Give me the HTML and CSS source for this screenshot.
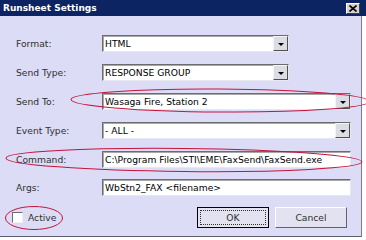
FILE: index.html
```html
<!DOCTYPE html>
<html>
<head>
  <meta charset="utf-8">
  <title>Runsheet Settings</title>
  <link rel="stylesheet" href="styles.css">
</head>
<body>
  <div class="window">
    <div class="titlebar">
      <span class="title">Runsheet Settings</span>
      <span class="close">
        <svg width="8" height="7" viewBox="0 0 8 7"><path d="M0.5 0.5 L7.5 6.5 M7.5 0.5 L0.5 6.5" stroke="#000" stroke-width="1.6"/></svg>
      </span>
    </div>

    <div class="dialog">
      <div class="form">
        <label>Format:</label>
        <div class="field select short"><span class="value">HTML</span><span class="arrow"></span></div>

        <label>Send Type:</label>
        <div class="field select short"><span class="value">RESPONSE GROUP</span><span class="arrow"></span></div>

        <label>Send To:</label>
        <div class="field select"><span class="value">Wasaga Fire, Station 2</span><span class="arrow"></span></div>

        <label>Event Type:</label>
        <div class="field select"><span class="value">- ALL -</span><span class="arrow"></span></div>

        <label>Command:</label>
        <div class="field"><span class="value">C:\Program Files\STI\EME\FaxSend\FaxSend.exe</span></div>

        <label class="tight">Args:</label>
        <div class="field tight"><span class="value">WbStn2_FAX &lt;filename&gt;</span></div>
      </div>

      <div class="footer">
        <div class="check"><span class="box"></span>Active</div>
        <div class="buttons">
          <button class="btn default"><span class="focus">OK</span></button>
          <button class="btn">Cancel</button>
        </div>
      </div>
    </div>

    <svg class="marks" width="366" height="240" viewBox="0 0 366 240">
      <ellipse cx="220" cy="100.5" rx="149" ry="11.5" transform="rotate(0.4 220 100.5)"/>
      <ellipse cx="184" cy="160" rx="178" ry="11.5" transform="rotate(0.6 184 160)"/>
      <ellipse cx="34" cy="218" rx="28.5" ry="11.5"/>
    </svg>
  </div>
</body>
</html>
```

FILE: styles.css
```css
body {
  margin: 0;
  background: #ffffff;
  font-family: "DejaVu Sans", Verdana, sans-serif;
  font-size: 9.2px;
  color: #000;
}

.window {
  position: relative;
  width: 366px;
  height: 240px;
  overflow: hidden;
}

.titlebar {
  height: 16px;
  background: #0c2462;
  display: flex;
  align-items: center;
  justify-content: space-between;
  padding: 0 6px 0 3px;
}

.title {
  color: #fff;
  font-weight: bold;
  font-size: 9px;
}

.close {
  width: 14px;
  height: 11px;
  background: #d6d3ce;
  border-top: 1px solid #fff;
  border-left: 1px solid #fff;
  border-right: 1px solid #404040;
  border-bottom: 1px solid #404040;
  box-sizing: border-box;
  display: flex;
  align-items: center;
  justify-content: center;
}

.dialog {
  width: 362px;
  height: 221px;
  box-sizing: border-box;
  background: #dcdcf6;
  border-right: 1px solid #7c7c8c;
  border-bottom: 1px solid #5c5c6c;
  padding: 19px 0 0 16px;
}

.form {
  display: grid;
  grid-template-columns: 86px 249px;
  grid-auto-rows: 17px;
  row-gap: 12px;
  align-items: center;
}

.form label {
  color: #303030;
}

.form .tight {
  margin-top: -2px;
}

.field {
  height: 17px;
  box-sizing: border-box;
  background: #fff;
  border-top: 1px solid #6c6c6c;
  border-left: 1px solid #6c6c6c;
  border-right: 1px solid #e8e8f0;
  border-bottom: 1px solid #e8e8f0;
  box-shadow: inset 1px 1px 0 #a8a8a8;
  display: flex;
  align-items: center;
  justify-content: space-between;
  padding-left: 2px;
}

.field.short {
  width: 187px;
}

.value {
  white-space: nowrap;
}

.arrow {
  width: 15px;
  height: 15px;
  box-sizing: border-box;
  background: #dcdce4;
  border-top: 1px solid #f4f4f8;
  border-left: 1px solid #f4f4f8;
  border-right: 1px solid #505050;
  border-bottom: 1px solid #505050;
  display: flex;
  align-items: center;
  justify-content: center;
}

.arrow::after {
  content: "";
  border-left: 3px solid transparent;
  border-right: 3px solid transparent;
  border-top: 3px solid #000;
  margin-top: 1px;
}

.footer {
  display: flex;
  align-items: center;
  justify-content: space-between;
  margin: 10px 14px 0 -6px;
}

.check {
  display: flex;
  align-items: center;
  gap: 5px;
  padding-left: 2px;
  color: #303030;
}

.check .box {
  width: 11px;
  height: 11px;
  box-sizing: border-box;
  background: #fff;
  border-top: 1px solid #6c6c6c;
  border-left: 1px solid #6c6c6c;
  border-right: 1px solid #f0f0f0;
  border-bottom: 1px solid #f0f0f0;
}

.buttons {
  display: flex;
  gap: 6px;
}

.btn {
  width: 72px;
  height: 21px;
  box-sizing: border-box;
  font-family: inherit;
  font-size: 9.2px;
  color: #303030;
  background: #e2e2f0;
  border-top: 1px solid #fff;
  border-left: 1px solid #fff;
  border-right: 1px solid #606070;
  border-bottom: 1px solid #606070;
  padding: 0;
  display: flex;
  align-items: center;
  justify-content: center;
}

.btn.default {
  border: 1px solid #000;
  padding: 2px;
}

.btn .focus {
  width: 100%;
  height: 100%;
  box-sizing: border-box;
  border: 1px dotted #303030;
  display: flex;
  align-items: center;
  justify-content: center;
}

.marks {
  position: absolute;
  left: 0;
  top: 0;
  pointer-events: none;
}

.marks ellipse {
  fill: none;
  stroke: #c4143c;
  stroke-width: 1;
}
```
